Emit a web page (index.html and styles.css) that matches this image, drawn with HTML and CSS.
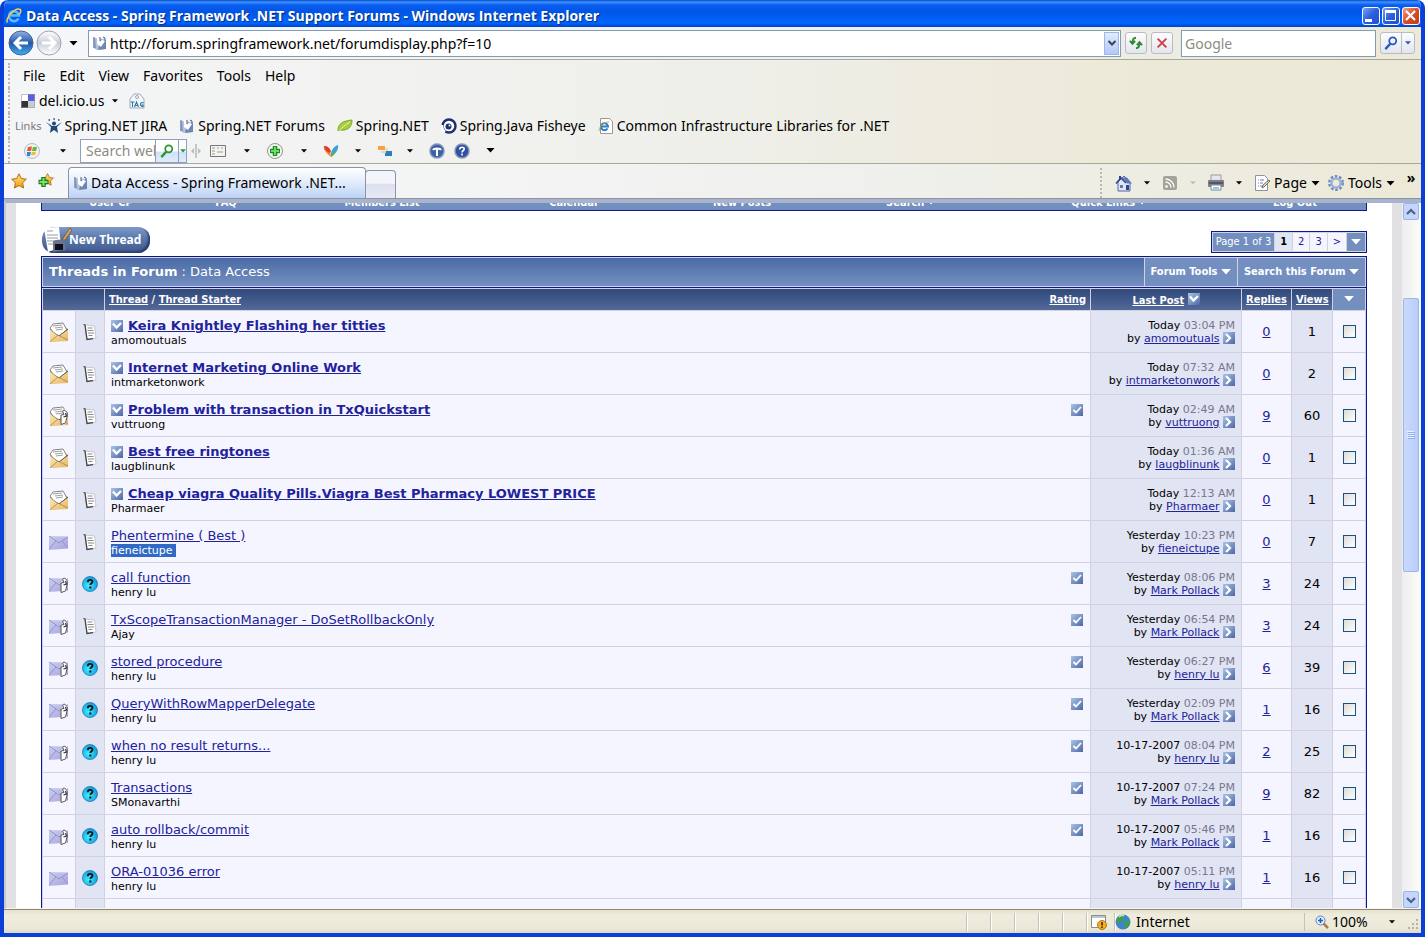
FILE: index.html
```html
<!DOCTYPE html>
<html lang="en">
<head>
<meta charset="utf-8">
<title>Data Access - Spring Framework .NET Support Forums</title>
<link rel="stylesheet" href="styles.css">
</head>
<body>
<svg class="defs" aria-hidden="true">
  <defs>
    <linearGradient id="g-blue" x1="0" y1="0" x2="0" y2="1"><stop offset="0" stop-color="#8fb4e6"/><stop offset=".5" stop-color="#2456ad"/><stop offset="1" stop-color="#3fb0f0"/></linearGradient>
    <linearGradient id="g-grey" x1="0" y1="0" x2="0" y2="1"><stop offset="0" stop-color="#fff"/><stop offset=".5" stop-color="#c9cfda"/><stop offset="1" stop-color="#fff"/></linearGradient>
    <linearGradient id="g-box" x1="0" y1="0" x2="1" y2="1"><stop offset="0" stop-color="#a9c4e6"/><stop offset="1" stop-color="#4d66a6"/></linearGradient>
    <linearGradient id="g-tan" x1="0" y1="0" x2="1" y2="1"><stop offset="0" stop-color="#fbe9b8"/><stop offset="1" stop-color="#e8b45c"/></linearGradient>
    <linearGradient id="g-lilac" x1="0" y1="0" x2="1" y2="1"><stop offset="0" stop-color="#c9d0ef"/><stop offset="1" stop-color="#a9a0dd"/></linearGradient>
    <radialGradient id="g-cyan" cx=".4" cy=".6" r=".6"><stop offset="0" stop-color="#3ff0ff"/><stop offset="1" stop-color="#149ade"/></radialGradient>
    <linearGradient id="g-star" x1="0" y1="0" x2="0" y2="1"><stop offset="0" stop-color="#ffe680"/><stop offset="1" stop-color="#f59a0c"/></linearGradient>
  </defs>
  <symbol id="arrow" viewBox="0 0 8 5"><path d="M0 0h8L4 4.500z" fill="currentColor"/></symbol>
  <symbol id="spring" viewBox="0 0 16 16"><path d="M1 2l3 1v11l-2-1z" fill="#7f93bc"/><path d="M3 3l10 1 1 10-10 1z" fill="#b3c2de"/><path d="M7 11l7-6v9l-8 1z" fill="#6f86b4"/><path d="M5 2l3 1v4l2-2 3 1-4 6-4-3z" fill="#fff"/><path d="M8 2v4M11 2l2 1v3" stroke="#44598c" fill="none"/><path d="M1.500 2v11" stroke="#8fa0c4"/></symbol>
  <symbol id="ie" viewBox="0 0 16 16"><path d="M12.500 10.500A5 5 0 1 1 13 7.600H5" fill="none" stroke="#5fbdf5" stroke-width="2.500"/><path d="M1.500 14.500C-1 11 9-1 14 1.500c2 1 0 4-1 5" fill="none" stroke="#f6cf55" stroke-width="1.500"/></symbol>
  <symbol id="env-new" viewBox="0 0 20 20"><path d="M1 7l8-6 10 6v11L1 20z" fill="#c9a870"/><path d="M1 6l3-4 10-1 4 7-8 6-6-4z" fill="#fff" stroke="#666" stroke-width=".8"/><path d="M4 4l9-1M6 6l8-1M7 8l7-1" stroke="#888" stroke-width=".8"/><path d="M1 8l8 6 10-6v11L1 20z" fill="url(#g-tan)"/><path d="M1 20l8-7 10 5" fill="none" stroke="#a8854c" stroke-width=".8"/><path d="M19 7l-9 7" stroke="#555" stroke-width=".9"/></symbol>
  <symbol id="env-old" viewBox="0 0 20 20"><path d="M0 4l19 .5v12L0 18z" fill="url(#g-lilac)"/><path d="M0 4l10 7 9-6M0 17l7-8M19 16l-6-7" fill="none" stroke="#8a90cc" stroke-width=".9"/></symbol>
  <symbol id="dot" viewBox="0 0 20 20"><path d="M12 8h2l-1-3 2-2c4 1 4 4 3 8l-1 7-5 1z" fill="#fff"/><path d="M12 18.500V9l3-.5-1.500-3.500L15 4c3 1 4 4 3 7l-1.500 6-4.500 1.500" fill="none" stroke="#555" stroke-width="1"/><path d="M14.500 11l3-1-1-3" fill="none" stroke="#333" stroke-width="1.200"/></symbol>
  <symbol id="note" viewBox="0 0 16 18"><path d="M3 2l9.500 1L14 15l-9 1.500z" fill="#fff" stroke="#b4b6c0" stroke-width=".7"/><path d="M1.500 1.500L3 2l2 14.500 6-.8" fill="none" stroke="#444" stroke-width="1.300"/><path d="M5.500 5h5M5.500 7.500h6M6 10h6M6.500 12.500h4" stroke="#8a8a90"/></symbol>
  <symbol id="ask" viewBox="0 0 16 16"><circle cx="8" cy="8" r="7.500" fill="url(#g-cyan)" stroke="#1b78b8" stroke-width=".8"/><path d="M5.700 6.200c0-3.300 4.800-3 4.800-.4 0 1.500-2.200 1.400-2.200 3.200" fill="none" stroke="#111" stroke-width="1.800"/><path d="M7.300 10.500h2v2h-2z" fill="#111"/></symbol>
  <symbol id="unread" viewBox="0 0 12 12"><path d="M0 0h12v12H0z" fill="url(#g-box)"/><path d="M2 3.500L5.500 7.500 10 3" fill="none" stroke="#fff" stroke-width="2.400"/></symbol>
  <symbol id="go" viewBox="0 0 12 12"><path d="M0 0h12v12H0z" fill="url(#g-box)"/><path d="M3 2l4 4-4 4" fill="none" stroke="#fff" stroke-width="2.200"/></symbol>
  <symbol id="tag" viewBox="0 0 12 12"><path d="M0 0h12v12H0z" fill="url(#g-box)"/><path d="M2.500 6L5 8.500 10 3" fill="none" stroke="#fff" stroke-width="1.800"/></symbol>
  <symbol id="star" viewBox="0 0 16 16"><path d="M8 .8l2.300 4.700 5 .7-3.700 3.600 1 5.200L8 12.500 3.400 15l1-5.200L.7 6.200l5-.7z" fill="url(#g-star)" stroke="#b06a10"/></symbol>
  <symbol id="lens" viewBox="0 0 16 16"><circle cx="10" cy="5.500" r="4" fill="none" stroke="currentColor" stroke-width="2"/><path d="M7 9l-5.500 6" stroke="currentColor" stroke-width="2.600"/></symbol>
</svg>

<div class="window">
  <header class="titlebar">
    <svg class="i16"><use href="#ie"/></svg>
    <h1>Data Access - Spring Framework .NET Support Forums - Windows Internet Explorer</h1>
    <button class="cap" aria-label="Minimize"><svg viewBox="0 0 16 16"><path d="M2 11h7v3H2z" fill="#fff"/></svg></button>
    <button class="cap" aria-label="Maximize"><svg viewBox="0 0 16 16"><path d="M2.500 3.500h10v9h-10z" fill="none" stroke="#fff"/><path d="M2 2h11v3H2z" fill="#fff"/></svg></button>
    <button class="cap close" aria-label="Close"><svg viewBox="0 0 16 16"><path d="M3 3l9 9M12 3l-9 9" stroke="#fff" stroke-width="2.200"/></svg></button>
  </header>

  <div class="address-row">
    <button class="round" aria-label="Back"><svg viewBox="0 0 26 26"><circle cx="13" cy="13" r="12" fill="url(#g-blue)" stroke="#4b6190"/><path d="M13 7l-6 6 6 6M7 13h13" fill="none" stroke="#fff" stroke-width="3"/></svg></button>
    <button class="round" aria-label="Forward"><svg viewBox="0 0 26 26"><circle cx="13" cy="13" r="12" fill="url(#g-grey)" stroke="#98a3b8"/><path d="M13 7l6 6-6 6M19 13H6" fill="none" stroke="#fff" stroke-width="3"/></svg></button>
    <button class="recent" aria-label="Recent pages"><svg class="arr"><use href="#arrow"/></svg></button>
    <div class="address">
      <svg class="i16"><use href="#spring"/></svg>
      <input type="text" aria-label="Address" value="http://forum.springframework.net/forumdisplay.php?f=10">
      <button aria-label="Show addresses"><svg viewBox="0 0 10 10"><path d="M1.500 3L5 6.500 8.500 3" fill="none" stroke="#345" stroke-width="2"/></svg></button>
    </div>
    <button class="tool" aria-label="Refresh"><svg viewBox="0 0 16 16"><path d="M8 2C5 2 4 4 4 8M1 5.500l3 3.500 3-3.500M8 14c3 0 4-2 4-6M9 10.500L12 7l3 3.500" fill="none" stroke="#2f8a35" stroke-width="2.200"/></svg></button>
    <button class="tool" aria-label="Stop"><svg viewBox="0 0 16 16"><path d="M3 3l10 10M13 3L3 13" stroke="#cf3f4c" stroke-width="2.200"/></svg></button>
    <input class="google" type="search" aria-label="Search" placeholder="Google">
    <div class="split">
      <button aria-label="Go"><svg class="i14 blue"><use href="#lens"/></svg></button>
      <button aria-label="Search options"><svg class="arr-s blue"><use href="#arrow"/></svg></button>
    </div>
  </div>

  <div class="bars">
    <nav class="bar menu">
      <a href="#">File</a><a href="#">Edit</a><a href="#">View</a><a href="#">Favorites</a><a href="#">Tools</a><a href="#">Help</a>
    </nav>
    <div class="bar delicious">
      <a href="#"><svg class="i14" viewBox="0 0 14 14"><path d="M0 0h7v7H0z" fill="#fff"/><path d="M7 0h7v7H7z" fill="#5a5fd8"/><path d="M0 7h7v7H0z" fill="#333"/><path d="M7 7h7v7H7z" fill="#c9cbd3"/><path d="M.5.5h13v13H.5z" fill="none" stroke="#99a" stroke-width=".6"/></svg>del.icio.us</a>
      <button aria-label="Bookmark options"><svg class="arr-s"><use href="#arrow"/></svg></button>
      <button aria-label="Tag this page"><svg class="i16" viewBox="0 0 16 16"><path d="M1 15V6l4-5h6l4 5v9z" fill="#f4f7fa" stroke="#9ab"/><circle cx="8" cy="4" r="1.500" fill="none" stroke="#9ab"/><path d="M1.500 9h4M3.500 9v5M5.500 14L7.500 9l2 5M6.500 12.500h2M14.500 10c-4-2-4 4-.5 3.500V12h-1.500" fill="none" stroke="#2f76a8" stroke-width="1.100"/></svg></button>
    </div>
    <nav class="bar links">
      <span>Links</span>
      <a href="#"><svg class="i16" viewBox="0 0 16 16"><path d="M0 4l5 5-1 6 4-3 4 3-1-6 5-5-6 4H6z" fill="#1d4a7e"/><circle cx="8" cy="5.500" r="2" fill="#1d4a7e"/><path d="M2.500 2h1.500M7.300 1h1.500M12 2h1.500" stroke="#1d4a7e" stroke-width="1.500"/></svg>Spring.NET JIRA</a>
      <a href="#"><svg class="i16"><use href="#spring"/></svg>Spring.NET Forums</a>
      <a href="#"><svg class="i16" viewBox="0 0 16 16"><path d="M1 13C1 5 6 3 15 2c0 7-4 11-12 10z" fill="#a8cc3c" stroke="#7fa82a"/><path d="M1 14C4 10 8 7 13 4" fill="none" stroke="#e8f4b8"/></svg>Spring.NET</a>
      <a href="#"><svg class="i16" viewBox="0 0 16 16"><circle cx="8" cy="8" r="6.500" fill="#fff" stroke="#1d2f6e" stroke-width="2.500"/><path d="M4 14a7 7 0 0 1-3-7" stroke="#fff" stroke-width="3" fill="none"/><circle cx="7.500" cy="8.500" r="3" fill="#1d2f6e"/><circle cx="8.500" cy="7.500" r="1" fill="#fff"/></svg>Spring.Java Fisheye</a>
      <a href="#"><svg class="i16" viewBox="0 0 16 16"><path d="M2.500.5h9l3 3v12h-12z" fill="#fff" stroke="#999"/><path d="M9.500 10.500A3.500 3.500 0 1 1 10 8.500H4" fill="none" stroke="#2a7cc8" stroke-width="2"/><path d="M1 13C0 10 7 3 11 4" fill="none" stroke="#d9a92c"/></svg>Common Infrastructure Libraries for .NET</a>
    </nav>
    <div class="bar live">
      <button aria-label="Windows Live"><svg class="i16" viewBox="0 0 16 16"><circle cx="8" cy="8" r="7.500" fill="#eef1f4" stroke="#b4bcc6"/><path d="M4 4l4-.5L7 8H3z" fill="#e2592b"/><path d="M9 4h4l-1 4H8z" fill="#6ab62e"/><path d="M3 9h4l-1 4H3z" fill="#3384d8"/><path d="M8 9h4l-1 3H7z" fill="#f4c021"/></svg></button>
      <button aria-label="Live menu"><svg class="arr-s"><use href="#arrow"/></svg></button>
      <form class="websearch"><input type="text" aria-label="Search web" value="Search web"><button type="button" aria-label="Search web"><svg class="i14 green"><use href="#lens"/></svg></button><button type="button" class="kind" aria-label="Search type"><svg class="arr-s green"><use href="#arrow"/></svg></button></form>
      <svg class="i14 mid" viewBox="0 0 14 14"><path d="M7 0v14" stroke="#999"/><path d="M5 4v6L2 7zM9 4v6l3-3z" fill="#bbb"/></svg>
      <button aria-label="Form fill"><svg class="i16" viewBox="0 0 16 16"><path d="M.5 2.500h15v11H.5z" fill="#f5f5ee" stroke="#777"/><path d="M2 5h3M7 5h2M11 5h2M2 8h3M2 11h3M7 9h6" stroke="#999"/></svg></button>
      <button aria-label="Form options"><svg class="arr-s"><use href="#arrow"/></svg></button>
      <button aria-label="Add"><svg class="i16" viewBox="0 0 16 16"><circle cx="8" cy="8" r="7.500" fill="#f4f8f4" stroke="#8a9a8a"/><path d="M8 3v10M3 8h10" stroke="#1f8a2a" stroke-width="4.500"/><path d="M8 4v8M4 8h8" stroke="#6fdc5c" stroke-width="2"/></svg></button>
      <button aria-label="Add options"><svg class="arr-s"><use href="#arrow"/></svg></button>
      <button aria-label="MSN"><svg class="i16" viewBox="0 0 16 16"><path d="M8 14C3 10 0 6 1 3c3 0 6 3 7 11z" fill="#f08a1c"/><path d="M1 3c3 0 5 1 7 5l-1 2C4 9 1 6 1 3z" fill="#e23b2e"/><path d="M8 14c-1-6 3-11 7-12 1 5-3 9-7 12z" fill="#3aa0e0"/><path d="M8 14c0-3 2-5 5-6-1 3-3 5-5 6z" fill="#58b83c"/></svg></button>
      <button aria-label="MSN options"><svg class="arr-s"><use href="#arrow"/></svg></button>
      <button aria-label="Highlights"><svg class="i16" viewBox="0 0 16 16"><path d="M1 3h7v4H1z" fill="#f9a13c"/><path d="M8 5h3v3H8z" fill="#f8dca8"/><path d="M8 8h7v5H8z" fill="#2d7fb8"/><path d="M4 8h5v2H4z" fill="#c6dcec"/></svg></button>
      <button aria-label="Highlight options"><svg class="arr-s"><use href="#arrow"/></svg></button>
      <button aria-label="Toolbar"><svg class="i16" viewBox="0 0 16 16"><circle cx="8" cy="8" r="7" fill="#3a5fae" stroke="#8794b4" stroke-width="1.500"/><path d="M4 7c1-2 7-2 8 0M8 5v8" stroke="#fff" stroke-width="2" fill="none"/></svg></button>
      <button aria-label="Help"><svg class="i16" viewBox="0 0 16 16"><circle cx="8" cy="8" r="7" fill="#2f4fa0" stroke="#8794b4" stroke-width="1.500"/><path d="M5.700 6.500c0-3 4.600-2.800 4.600-.4C10.300 7.600 8 7.500 8 9.500M8 10.500v2" fill="none" stroke="#fff" stroke-width="1.600"/></svg></button>
      <button aria-label="More"><svg class="arr"><use href="#arrow"/></svg></button>
    </div>
  </div>

  <div class="tabs">
    <button class="fav" aria-label="Favorites Center"><svg class="i16"><use href="#star"/></svg></button>
    <button class="fav" aria-label="Add to Favorites"><svg class="i16" viewBox="0 0 16 16"><use href="#star" x="3" y="0" width="13" height="13"/><path d="M5.500 4v10M.5 9h10" stroke="#1d7a24" stroke-width="4.500"/><path d="M5.500 5v8M1.500 9h8" stroke="#7fe05c" stroke-width="2"/></svg></button>
    <a class="tab" href="#"><svg class="i16"><use href="#spring"/></svg>Data Access - Spring Framework .NET...</a>
    <button class="newtab" aria-label="New Tab"></button>
    <div class="commands">
      <button aria-label="Home"><svg class="i18" viewBox="0 0 18 18"><path d="M3 8l6-6 6 6v9H3z" fill="#dfe6f5" stroke="#5566a0"/><path d="M1 9.500L6 4l5 5" fill="none" stroke="#31458c" stroke-width="1.600"/><path d="M4 2h2v3H4z" fill="#31458c"/><path d="M6 3.500h6l5 6h-5z" fill="#5d78b8"/><path d="M11 11h3v5h-3z" fill="#31458c"/><path d="M5 11h3v3H5z" fill="#5d78b8"/></svg></button>
      <button aria-label="Home options"><svg class="arr-s"><use href="#arrow"/></svg></button>
      <button aria-label="Feeds"><svg class="i14" viewBox="0 0 14 14"><rect width="14" height="14" rx="2" fill="#a3a39b"/><circle cx="3.500" cy="10.500" r="1.300" fill="#fff"/><path d="M2.500 6a5.500 5.500 0 0 1 5.500 5.500M2.500 3a8.500 8.500 0 0 1 8.500 8.500" fill="none" stroke="#fff" stroke-width="1.300"/></svg></button>
      <button aria-label="Feed options"><svg class="arr-s dim"><use href="#arrow"/></svg></button>
      <button aria-label="Print"><svg class="i18" viewBox="0 0 18 18"><path d="M4 1h10v6H4z" fill="#e4e8ee" stroke="#999"/><rect x="1" y="6" width="16" height="7" rx="1" fill="#7b7f88"/><path d="M2 9h14" stroke="#333"/><path d="M4 11h10v5H4z" fill="#fff" stroke="#789"/><path d="M6 14h6" stroke="#39c"/></svg></button>
      <button aria-label="Print options"><svg class="arr-s"><use href="#arrow"/></svg></button>
      <button class="word"><svg class="i16" viewBox="0 0 16 16"><path d="M1.500.5h9l3 3v12h-12z" fill="#fff" stroke="#8a93a8"/><path d="M4 5h1M6 5h4M4 8h1M6 8h3M4 11h1M6 11h3" stroke="#6a78c0"/><path d="M8 13l1-3 6-5 1 1-6 6z" fill="#e8d9a0" stroke="#776"/></svg>Page<svg class="arr"><use href="#arrow"/></svg></button>
      <button class="word"><svg class="i16" viewBox="0 0 16 16"><circle cx="8" cy="8" r="6.500" fill="none" stroke="#7390bd" stroke-width="3" stroke-dasharray="2.500 1.600"/><circle cx="8" cy="8" r="4.500" fill="none" stroke="#9db4d8" stroke-width="2.500"/></svg>Tools<svg class="arr"><use href="#arrow"/></svg></button>
      <button class="more" aria-label="More commands">»</button>
    </div>
  </div>

  <div class="view">
    <main class="page">
      <nav class="strip">
        <a href="#">User CP</a><a href="#">FAQ</a><a href="#">Members List</a><a href="#">Calendar</a><a href="#">New Posts</a><a href="#">Search <svg class="arr-s"><use href="#arrow"/></svg></a><a href="#">Quick Links <svg class="arr-s"><use href="#arrow"/></svg></a><a href="#">Log Out</a>
      </nav>
      <div class="actions">
        <a class="newthread" href="#"><svg viewBox="0 0 30 26"><path d="M2 1l15-1 2 20-13 5z" fill="#fff"/><path d="M5 4h6M5 8h11M5 11h11M5 14h8M6 17h6" stroke="#999"/><path d="M20 13L28 1l2 2-7 10z" fill="#d9a860" stroke="#70481c" stroke-width=".7"/><path d="M11 15c0-3 12-3 12 0l1 8-13 2z" fill="#6a7490"/><path d="M13 17h8v6h-8z" fill="#0c0f1c"/></svg>New Thread</a>
        <nav class="pager"><span class="of">Page 1 of 3</span><b>1</b><a href="#">2</a><a href="#">3</a><a href="#">&gt;</a><button aria-label="Go to page"><svg class="arr-l"><use href="#arrow"/></svg></button></nav>
      </div>
      <div class="tcat">
        <h2><b>Threads in Forum</b> : Data Access</h2>
        <a href="#">Forum Tools <svg class="arr-l"><use href="#arrow"/></svg></a>
        <a href="#">Search this Forum <svg class="arr-l"><use href="#arrow"/></svg></a>
      </div>
      <table class="threads">
        <colgroup><col class="c-icon"><col class="c-note"><col><col class="c-last"><col class="c-rep"><col class="c-view"><col class="c-box"></colgroup>
        <thead><tr>
          <th colspan="2"></th>
          <th><div class="heads"><span><a href="#">Thread</a> / <a href="#">Thread Starter</a></span><a href="#">Rating</a></div></th>
          <th><a href="#">Last Post</a> <svg class="i12"><use href="#unread"/></svg></th>
          <th><a href="#">Replies</a></th><th><a href="#">Views</a></th>
          <th class="pick"><svg class="arr-l"><use href="#arrow"/></svg></th>
        </tr></thead>
        <tbody>
        <tr class="new"><td><svg class="st"><use href="#env-new"/></svg></td><td><svg class="nt"><use href="#note"/></svg></td><td><div class="title"><svg class="i12"><use href="#unread"/></svg><a href="#">Keira Knightley Flashing her titties</a></div><div class="by">amomoutuals</div></td><td>Today <time>03:04 PM</time><br>by <a href="#">amomoutuals</a> <svg class="i12"><use href="#go"/></svg></td><td><a href="#">0</a></td><td>1</td><td><input type="checkbox" aria-label="Select thread 1"></td></tr>
        <tr class="new"><td><svg class="st"><use href="#env-new"/></svg></td><td><svg class="nt"><use href="#note"/></svg></td><td><div class="title"><svg class="i12"><use href="#unread"/></svg><a href="#">Internet Marketing Online Work</a></div><div class="by">intmarketonwork</div></td><td>Today <time>07:32 AM</time><br>by <a href="#">intmarketonwork</a> <svg class="i12"><use href="#go"/></svg></td><td><a href="#">0</a></td><td>2</td><td><input type="checkbox" aria-label="Select thread 2"></td></tr>
        <tr class="new"><td><svg class="st"><use href="#env-new"/><use href="#dot"/></svg></td><td><svg class="nt"><use href="#note"/></svg></td><td><div class="title"><svg class="i12"><use href="#unread"/></svg><a href="#">Problem with transaction in TxQuickstart</a><svg class="i12 tag"><use href="#tag"/></svg></div><div class="by">vuttruong</div></td><td>Today <time>02:49 AM</time><br>by <a href="#">vuttruong</a> <svg class="i12"><use href="#go"/></svg></td><td><a href="#">9</a></td><td>60</td><td><input type="checkbox" aria-label="Select thread 3"></td></tr>
        <tr class="new"><td><svg class="st"><use href="#env-new"/></svg></td><td><svg class="nt"><use href="#note"/></svg></td><td><div class="title"><svg class="i12"><use href="#unread"/></svg><a href="#">Best free ringtones</a></div><div class="by">laugblinunk</div></td><td>Today <time>01:36 AM</time><br>by <a href="#">laugblinunk</a> <svg class="i12"><use href="#go"/></svg></td><td><a href="#">0</a></td><td>1</td><td><input type="checkbox" aria-label="Select thread 4"></td></tr>
        <tr class="new"><td><svg class="st"><use href="#env-new"/></svg></td><td><svg class="nt"><use href="#note"/></svg></td><td><div class="title"><svg class="i12"><use href="#unread"/></svg><a href="#">Cheap viagra Quality Pills.Viagra Best Pharmacy LOWEST PRICE</a></div><div class="by">Pharmaer</div></td><td>Today <time>12:13 AM</time><br>by <a href="#">Pharmaer</a> <svg class="i12"><use href="#go"/></svg></td><td><a href="#">0</a></td><td>1</td><td><input type="checkbox" aria-label="Select thread 5"></td></tr>
        <tr><td><svg class="st"><use href="#env-old"/></svg></td><td><svg class="nt"><use href="#note"/></svg></td><td><div class="title"><a href="#">Phentermine ( Best )</a></div><div class="by"><mark>fieneictupe</mark></div></td><td>Yesterday <time>10:23 PM</time><br>by <a href="#">fieneictupe</a> <svg class="i12"><use href="#go"/></svg></td><td><a href="#">0</a></td><td>7</td><td><input type="checkbox" aria-label="Select thread 6"></td></tr>
        <tr><td><svg class="st"><use href="#env-old"/><use href="#dot"/></svg></td><td><svg class="i16"><use href="#ask"/></svg></td><td><div class="title"><a href="#">call function</a><svg class="i12 tag"><use href="#tag"/></svg></div><div class="by">henry lu</div></td><td>Yesterday <time>08:06 PM</time><br>by <a href="#">Mark Pollack</a> <svg class="i12"><use href="#go"/></svg></td><td><a href="#">3</a></td><td>24</td><td><input type="checkbox" aria-label="Select thread 7"></td></tr>
        <tr><td><svg class="st"><use href="#env-old"/><use href="#dot"/></svg></td><td><svg class="nt"><use href="#note"/></svg></td><td><div class="title"><a href="#">TxScopeTransactionManager - DoSetRollbackOnly</a><svg class="i12 tag"><use href="#tag"/></svg></div><div class="by">Ajay</div></td><td>Yesterday <time>06:54 PM</time><br>by <a href="#">Mark Pollack</a> <svg class="i12"><use href="#go"/></svg></td><td><a href="#">3</a></td><td>24</td><td><input type="checkbox" aria-label="Select thread 8"></td></tr>
        <tr><td><svg class="st"><use href="#env-old"/><use href="#dot"/></svg></td><td><svg class="i16"><use href="#ask"/></svg></td><td><div class="title"><a href="#">stored procedure</a><svg class="i12 tag"><use href="#tag"/></svg></div><div class="by">henry lu</div></td><td>Yesterday <time>06:27 PM</time><br>by <a href="#">henry lu</a> <svg class="i12"><use href="#go"/></svg></td><td><a href="#">6</a></td><td>39</td><td><input type="checkbox" aria-label="Select thread 9"></td></tr>
        <tr><td><svg class="st"><use href="#env-old"/><use href="#dot"/></svg></td><td><svg class="i16"><use href="#ask"/></svg></td><td><div class="title"><a href="#">QueryWithRowMapperDelegate</a><svg class="i12 tag"><use href="#tag"/></svg></div><div class="by">henry lu</div></td><td>Yesterday <time>02:09 PM</time><br>by <a href="#">Mark Pollack</a> <svg class="i12"><use href="#go"/></svg></td><td><a href="#">1</a></td><td>16</td><td><input type="checkbox" aria-label="Select thread 10"></td></tr>
        <tr><td><svg class="st"><use href="#env-old"/><use href="#dot"/></svg></td><td><svg class="i16"><use href="#ask"/></svg></td><td><div class="title"><a href="#">when no result returns...</a><svg class="i12 tag"><use href="#tag"/></svg></div><div class="by">henry lu</div></td><td>10-17-2007 <time>08:04 PM</time><br>by <a href="#">henry lu</a> <svg class="i12"><use href="#go"/></svg></td><td><a href="#">2</a></td><td>25</td><td><input type="checkbox" aria-label="Select thread 11"></td></tr>
        <tr><td><svg class="st"><use href="#env-old"/><use href="#dot"/></svg></td><td><svg class="i16"><use href="#ask"/></svg></td><td><div class="title"><a href="#">Transactions</a><svg class="i12 tag"><use href="#tag"/></svg></div><div class="by">SMonavarthi</div></td><td>10-17-2007 <time>07:24 PM</time><br>by <a href="#">Mark Pollack</a> <svg class="i12"><use href="#go"/></svg></td><td><a href="#">9</a></td><td>82</td><td><input type="checkbox" aria-label="Select thread 12"></td></tr>
        <tr><td><svg class="st"><use href="#env-old"/><use href="#dot"/></svg></td><td><svg class="i16"><use href="#ask"/></svg></td><td><div class="title"><a href="#">auto rollback/commit</a><svg class="i12 tag"><use href="#tag"/></svg></div><div class="by">henry lu</div></td><td>10-17-2007 <time>05:46 PM</time><br>by <a href="#">Mark Pollack</a> <svg class="i12"><use href="#go"/></svg></td><td><a href="#">1</a></td><td>16</td><td><input type="checkbox" aria-label="Select thread 13"></td></tr>
        <tr><td><svg class="st"><use href="#env-old"/></svg></td><td><svg class="i16"><use href="#ask"/></svg></td><td><div class="title"><a href="#">ORA-01036 error</a></div><div class="by">henry lu</div></td><td>10-17-2007 <time>05:11 PM</time><br>by <a href="#">henry lu</a> <svg class="i12"><use href="#go"/></svg></td><td><a href="#">1</a></td><td>16</td><td><input type="checkbox" aria-label="Select thread 14"></td></tr>
        <tr><td></td><td></td><td><div class="title"><svg class="i12 tag"><use href="#tag"/></svg></div><div class="by"></div></td><td></td><td></td><td></td><td></td></tr>
        </tbody>
      </table>
    </main>
    <div class="scroll">
      <button aria-label="Scroll up"><svg viewBox="0 0 10 10"><path d="M1 7l4-4 4 4" fill="none" stroke="#4d6185" stroke-width="2.200"/></svg></button>
      <div class="gap-top"></div>
      <div class="thumb"><svg viewBox="0 0 8 8"><path d="M0 .5h7M0 2.500h7M0 4.500h7M0 6.500h7" stroke="#eef4fe"/><path d="M1 1.500h7M1 3.500h7M1 5.500h7M1 7.500h7" stroke="#8cb0f8"/></svg></div>
      <div class="gap-bottom"></div>
      <button aria-label="Scroll down"><svg viewBox="0 0 10 10"><path d="M1 3l4 4 4-4" fill="none" stroke="#4d6185" stroke-width="2.200"/></svg></button>
    </div>
  </div>

  <footer class="status">
    <span class="cell"></span><span class="cell"></span><span class="cell"></span><span class="cell"></span><span class="cell"></span>
    <span class="cell alert"><svg class="i16" viewBox="0 0 16 16"><path d="M.5 1.500h14v12H.5z" fill="#fff" stroke="#8c8c80"/><path d="M1 2h13v2H1z" fill="#b8c4d8"/><circle cx="11" cy="11" r="4.500" fill="#f5b021" stroke="#b87412"/><path d="M11 8v3.500M11 12.500v1.500" stroke="#3a2400" stroke-width="1.500"/></svg></span>
    <span class="cell zone"><svg class="i16" viewBox="0 0 16 16"><circle cx="8" cy="8" r="7.500" fill="#3d84cc"/><path d="M3 3c3-3 6-2 7 0L7 6 5 9 1 8zM9 8l5-2c2 3 0 6-3 8l-2-3z" fill="#3fa04a"/><path d="M4 3c2-2 4-2 5-1" stroke="#cfe8d4" stroke-width="1.500" fill="none"/></svg>Internet</span>
    <button class="zoom"><svg class="i14" viewBox="0 0 14 14"><path d="M8 8l5 5" stroke="#b07a4a" stroke-width="2.500"/><circle cx="5.500" cy="5.500" r="4.500" fill="#e4f0fc" stroke="#5b7fb8"/><path d="M5.500 3v5M3 5.500h5" stroke="#1c5fc4" stroke-width="1.600"/></svg>100%<svg class="arr-s"><use href="#arrow"/></svg></button>
    <svg class="grip" viewBox="0 0 12 12"><path d="M9 0h2v2H9zM5 4h2v2H5zM9 4h2v2H9zM1 8h2v2H1zM5 8h2v2H5zM9 8h2v2H9z" fill="#b8b4a2"/></svg>
  </footer>
</div>
</body>
</html>
```

FILE: styles.css
```css
* { box-sizing: border-box; }
body { margin: 0; font-family: "DejaVu Sans", Verdana, sans-serif; font-size: 13px; color: #000; }
button, input { font: inherit; color: inherit; margin: 0; padding: 0; border: 0; background: none; outline: 0; }
button { display: flex; align-items: center; justify-content: center; }
a { color: inherit; text-decoration: none; }
svg { flex: none; }
.defs { display: block; width: 0; height: 0; }
.i12 { width: 12px; height: 12px; }
.i14 { width: 14px; height: 14px; }
.i16 { width: 16px; height: 16px; }
.i18 { width: 18px; height: 18px; }
.arr { width: 9px; height: 5px; }
.arr-s { width: 6px; height: 4px; }
.arr-l { width: 10px; height: 6px; }
.blue { color: #2458c8; }
.green { color: #2c9430; }
.dim { color: #c4c0b0; }

.window { height: 100vh; display: flex; flex-direction: column; overflow: hidden; background: #fff; border: solid #0a3fd8; border-width: 0 4px 4px; border-radius: 8px 8px 0 0; }
.window > * { flex: none; }

.titlebar { height: 27px; margin: 0 -4px; padding: 4px 5px 0 6px; display: flex; align-items: center; gap: 2px; background: linear-gradient(#0a46cc 0, #3d95ff 2px, #0a5df0 5px, #0055e5 12px, #0066ff 23px, #0042c8 27px); }
.titlebar h1 { flex: 1; margin: 0 0 0 2px; font: bold 14px/18px "Open Sans", sans-serif; color: #fff; text-shadow: 1px 1px 1px #0a2a80; white-space: nowrap; overflow: hidden; }
.cap { width: 18px; height: 18px; border: 1px solid #fff; border-radius: 3px; background: linear-gradient(135deg, #7aa2f5, #2a5fdc 50%, #2250c8); }
.cap svg { width: 16px; height: 16px; }
.close { background: linear-gradient(135deg, #f0a088, #dc4c28 50%, #c03c18); }

.address-row { height: 33px; padding: 0 6px 0 4px; display: flex; align-items: center; gap: 4px; border-bottom: 1px solid #aaa898; background: linear-gradient(90deg, #f6f7fa, #f0f1ee 60%, #ece9d8); font: 14px/20px "Noto Sans", sans-serif; }
.round { width: 26px; height: 26px; }
.round + .round { margin-left: -2px; }
.round svg { width: 26px; height: 26px; }
.recent { width: 14px; height: 20px; }
.address { flex: 1; height: 27px; margin-left: 4px; display: flex; align-items: center; gap: 2px; padding: 1px 1px 1px 3px; border: 1px solid #7f9db9; background: #fff; }
.address input { flex: 1; height: 22px; }
.address button { width: 15px; height: 23px; border: 1px solid #9db8e8; background: linear-gradient(#e1eafe, #b4c8f6); }
.address button svg { width: 10px; height: 10px; }
.tool { width: 22px; height: 22px; border: 1px solid #b8bcc8; border-radius: 3px; background: linear-gradient(#fdfdfd, #e4e6ec); }
.tool svg { width: 14px; height: 14px; }
.google { width: 195px; height: 27px; margin-left: 4px; padding: 0 3px; border: 1px solid #7f9db9; background: #fff; }
.google::placeholder { color: #8c8c84; opacity: 1; }
.split { display: flex; height: 22px; border: 1px solid #b8bcc8; border-radius: 3px; background: linear-gradient(#fdfdfd, #e4e6ec); }
.split button { width: 20px; }
.split button + button { width: 13px; border-left: 1px solid #b8bcc8; }

.bars { height: 104px; padding: 3px 0 0 4px; border-bottom: 1px solid #aaa898; background: linear-gradient(90deg, #f4f5f7, #efefea 50%, #ede9d8 80%); font: 14px/20px "Noto Sans", sans-serif; }
.bar { height: 25px; display: flex; align-items: center; border-left: 2px dotted #b8b8b0; }
.bar a { display: flex; align-items: center; gap: 4px; white-space: nowrap; }
.menu { padding-left: 13px; gap: 14px; }
.delicious { padding-left: 11px; }
.delicious button { width: 22px; }
.links { padding-left: 5px; gap: 12px; }
.links a { gap: 3px; }
.links span { font-size: 11px; color: #777; margin-right: -8px; }
.live { padding-left: 8px; display: grid; grid-template-columns: 28px 34px 107px 18px 26px 32px 24px 34px 20px 34px 20px 30px 24px 26px 30px; }
.mid { justify-self: center; }
.websearch { height: 24px; display: flex; border: 1px solid #8ea0c0; background: #fff; }
.websearch input { flex: 1; min-width: 0; padding-left: 5px; color: #8c8c84; }
.websearch button { width: 23px; border-left: 1px solid #8ea0c0; background: linear-gradient(#fff 50%, #cfe0fa 55%, #e0ecfc); }
.websearch .kind { width: 8px; }

.tabs { height: 35px; padding-left: 1px; display: flex; align-items: flex-end; border-bottom: 1px solid #8a93a4; background: linear-gradient(90deg, #f6f7fa, #f0f1ee 60%, #ece9d8); font: 14px/20px "Noto Sans", sans-serif; }
.fav { width: 27px; height: 35px; }
.tab { width: 298px; height: 31px; margin-left: 9px; padding: 0 4px; display: flex; align-items: center; gap: 2px; border: 1px solid #8a93a8; border-bottom: 0; border-radius: 4px 4px 0 0; background: linear-gradient(#fff, #e8f0fc 40%, #bcd2f6); white-space: nowrap; }
.newtab { width: 31px; height: 28px; margin-left: -1px; border: 1px solid #8a93a8; border-bottom: 0; border-radius: 4px 4px 0 0; background: linear-gradient(#f4f5fa 45%, #dcdfee 50%, #e8eaf4); }
.commands { margin-left: auto; padding-left: 10px; height: 30px; display: flex; align-items: center; border-left: 2px dotted #b8b8b0; }
.commands button { min-width: 23px; height: 30px; }
.commands .word { gap: 4px; margin-left: 4px; }
.commands .word + .word { margin-left: 8px; }
.commands .more { width: 26px; padding-left: 6px; align-items: flex-start; font-weight: bold; }

.view { flex: 1 1 0; min-height: 0; display: flex; border-top: 4px solid #a9b3cc; border-left: 2px solid #c8c8c8; border-bottom: 1px solid #f6f4ea; background: #e1e1e4; }
.page { flex: 1; margin: 0 10px; padding: 0 25px; background: #fff; overflow: hidden; }
.strip { height: 8px; display: grid; grid-template-columns: 138fr 92fr 220fr 164fr 172fr 164fr 232fr 142fr; align-content: end; overflow: hidden; border: 1px solid #0b198c; border-top: 0; background: #738fbf; font: bold 11px/14px "DejaVu Sans Condensed", Tahoma, sans-serif; color: #fff; text-align: center; }
.strip svg { vertical-align: 1px; }
.actions { display: flex; justify-content: space-between; align-items: flex-end; padding: 16px 0 3px; }
.newthread { width: 108px; height: 26px; margin-left: 1px; display: flex; align-items: center; border-radius: 12px; background: linear-gradient(#7d9ac8, #5877ab 45%, #43598c); box-shadow: inset -2px -2px 2px #2c4070; color: #fff; font: bold 12px/26px "Open Sans", sans-serif; white-space: nowrap; }
.newthread svg { width: 30px; height: 26px; margin-right: -3px; }
.pager { display: flex; gap: 1px; padding: 1px; border: 1px solid #0b198c; background: #d1d1e1; font-family: "DejaVu Sans Condensed", Tahoma, sans-serif; font-size: 11px; line-height: 18px; text-align: center; }
.pager > * { padding: 0 5px; background: #f5f5ff; color: #22229c; }
.pager .of { padding: 0 3px; background: #738fbf; color: #fff; }
.pager b { background: #e1e4f2; color: #000; }
.pager button { width: 18px; padding: 0; background: #738fbf; color: #fff; }

.tcat { height: 31px; display: flex; gap: 1px; padding: 1px; border: 1px solid #0b198c; border-bottom: 0; background: #d1d1e1; color: #fff; line-height: 28px; }
.tcat h2 { flex: 1; margin: 0; padding: 0 6px; font-size: 13px; font-weight: normal; background: linear-gradient(#4a6aa6, #7590c0); }
.tcat a { padding: 0 6px; background: #738fbf; font-family: "DejaVu Sans Condensed", Tahoma, sans-serif; font-size: 11px; font-weight: bold; white-space: nowrap; }

.threads { width: 100%; table-layout: fixed; border-spacing: 1px; border: 1px solid #0b198c; background: #d1d1e1; }
.c-icon { width: 32px; }
.c-note { width: 28px; }
.c-last { width: 150px; }
.c-rep { width: 49px; }
.c-view { width: 40px; }
.c-box { width: 32px; }
.threads th { height: 21px; padding: 0 4px; background: linear-gradient(#30497a, #52699a); color: #fff; font-family: "DejaVu Sans Condensed", Tahoma, sans-serif; font-size: 11px; line-height: 13px; white-space: nowrap; }
.threads th a { text-decoration: underline; }
.threads th svg { vertical-align: -1px; }
.threads .pick { background: #738fbf; }
.threads .pick svg { vertical-align: 1px; }
.heads { display: flex; justify-content: space-between; }
.threads td { height: 41px; padding: 0; background: #f5f5ff; text-align: center; vertical-align: middle; }
.threads td:nth-child(even) { background: #e1e4f2; }
.threads td:nth-child(3) { padding: 5px 6px 4px; text-align: left; }
.threads td:nth-child(4) { padding: 0 6px; text-align: right; font-size: 11px; line-height: 13px; white-space: nowrap; }
.threads td a { color: #22229c; text-decoration: underline; }
.threads td svg { vertical-align: middle; }
.threads td:nth-child(4) svg { vertical-align: -2px; }
.threads time { color: #777790; }
.title { display: flex; align-items: center; gap: 5px; line-height: 17px; min-height: 17px; white-space: nowrap; }
.new .title a { font-weight: bold; }
.title .tag { margin: 0 1px 0 auto; }
.by { font-size: 11px; line-height: 13px; min-height: 13px; }
.by mark { padding: 0 3px 0 0; background: #316ac5; color: #fff; }
.st { width: 20px; height: 20px; }
.nt { width: 16px; height: 18px; }
.threads input { appearance: none; display: block; width: 13px; height: 13px; margin: 0 auto; border: 1px solid #1c5180; background: linear-gradient(135deg, #dcdcd7, #fff); }

.scroll { width: 19px; padding-right: 1px; display: flex; flex-direction: column; align-items: center; background: linear-gradient(90deg, #eeedf0, #fdfdf8); }
.scroll button { width: 16px; height: 17px; border: 1px solid #9ab4ee; border-radius: 2px; background: #c5d5fc; }
.scroll button svg { width: 10px; height: 10px; }
.gap-top { flex: 78; }
.thumb { flex: 273; width: 16px; display: flex; align-items: center; justify-content: center; border: 1px solid #9ab4ee; border-radius: 2px; background: linear-gradient(90deg, #cbdafd, #b9cdfb); }
.thumb svg { width: 8px; height: 8px; }
.gap-bottom { flex: 319; }

.status { height: 24px; display: flex; align-items: center; justify-content: flex-end; border-top: 1px solid #8c8a7c; background: linear-gradient(#e4e0cc, #efecde 5px, #ece9d8 18px, #dedac6); font: 14px/20px "Noto Sans", sans-serif; }
.cell { width: 24px; height: 18px; display: flex; align-items: center; border-left: 1px solid #c6c3b2; box-shadow: inset 1px 0 #fff; }
.cell.alert { width: 28px; padding-left: 4px; }
.cell.zone { width: 190px; gap: 5px; }
.zoom { gap: 3px; width: 91px; padding-left: 10px; height: 18px; justify-content: flex-start; border-left: 1px solid #c6c3b2; }
.zoom .arr-s { margin-left: auto; }
.grip { width: 12px; height: 12px; align-self: flex-end; margin: 0 2px 2px 12px; }
```
